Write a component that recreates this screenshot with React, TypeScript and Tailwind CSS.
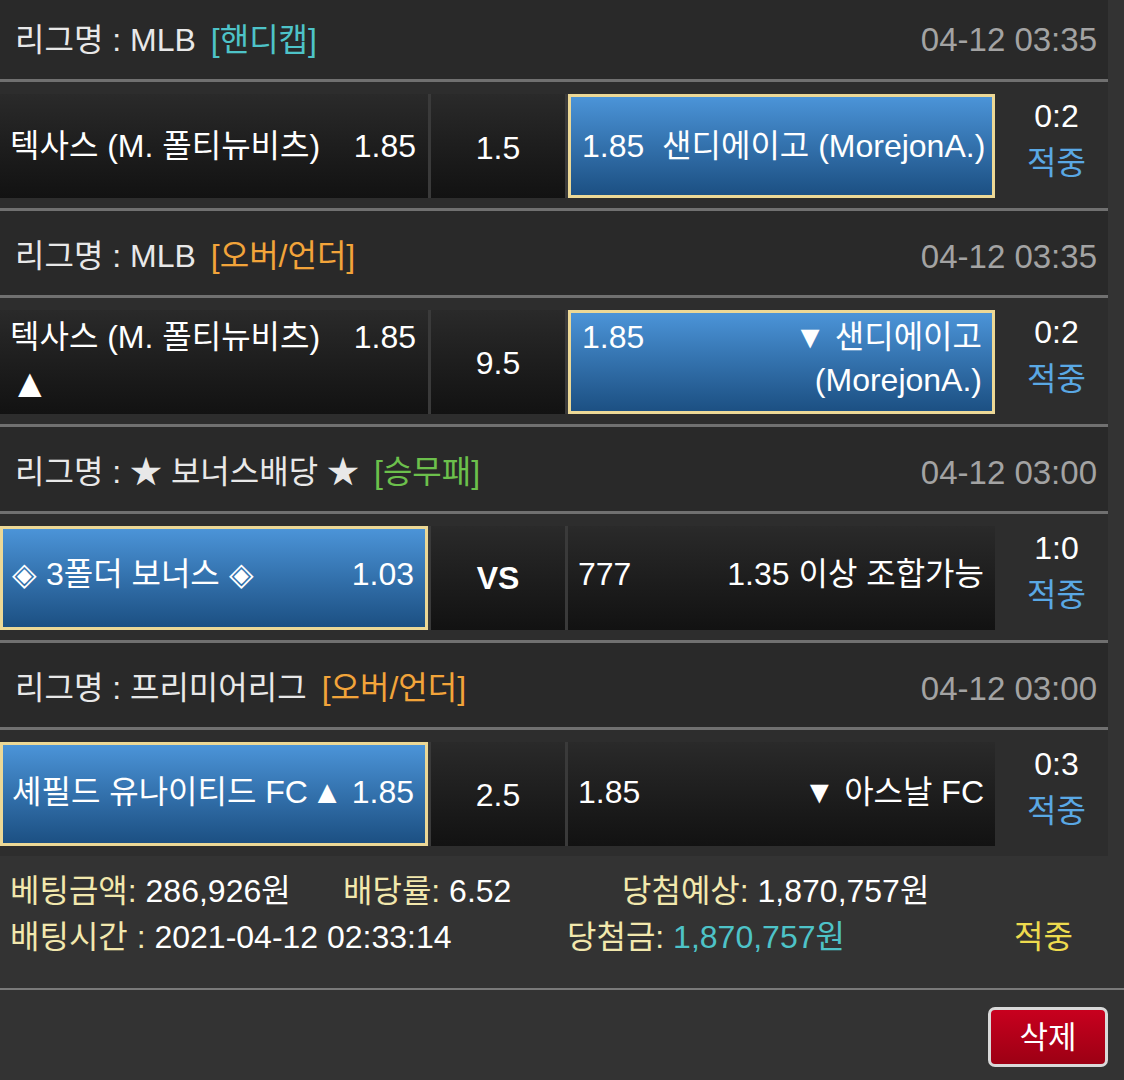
import type React from "react"

const darkCell = "bg-linear-to-b from-[#2a2a2a] to-[#121212] text-white"
const blueCell = "bg-linear-to-b from-[#4b94d8] to-[#1c5083] border-[3px] border-[#ecd896] text-white"

interface Game {
  league: string
  tag: string
  tagColor: string
  date: string
  left: React.ReactNode
  leftBlue?: boolean
  middle: React.ReactNode
  right: React.ReactNode
  rightBlue?: boolean
  score: string
}

const games: Game[] = [
  {
    league: "리그명 : MLB",
    tag: "[핸디캡]",
    tagColor: "text-[#4ec3c8]",
    date: "04-12 03:35",
    left: (
      <div className="flex w-full items-center justify-between pl-[10px] pr-[12px]">
        <span>텍사스 (M. 폴티뉴비츠)</span>
        <span>1.85</span>
      </div>
    ),
    middle: <span className="pt-[4px]">1.5</span>,
    right: (
      <div className="flex w-full items-center pl-[11px]">
        <span className="whitespace-nowrap">1.85&nbsp;&nbsp;샌디에이고 (MorejonA.)</span>
      </div>
    ),
    rightBlue: true,
    score: "0:2",
  },
  {
    league: "리그명 : MLB",
    tag: "[오버/언더]",
    tagColor: "text-[#f2a43a]",
    date: "04-12 03:35",
    left: (
      <div className="flex w-full flex-col self-start pl-[10px] pr-[12px] pt-[9px]">
        <div className="flex h-[36px] items-center justify-between">
          <span>텍사스 (M. 폴티뉴비츠)</span>
          <span>1.85</span>
        </div>
        <div className="flex h-[56px] items-center text-[40px]">▲</div>
      </div>
    ),
    middle: <span className="pt-[2px]">9.5</span>,
    right: (
      <div className="flex w-full flex-col self-start pl-[11px] pr-[10px] pt-[6px]">
        <div className="flex h-[36px] items-center justify-between">
          <span>1.85</span>
          <span className="whitespace-nowrap">▼ 샌디에이고</span>
        </div>
        <div className="flex h-[50px] items-center justify-end">(MorejonA.)</div>
      </div>
    ),
    rightBlue: true,
    score: "0:2",
  },
  {
    league: "리그명 : ★ 보너스배당 ★",
    tag: "[승무패]",
    tagColor: "text-[#6cc04c]",
    date: "04-12 03:00",
    left: (
      <div className="flex w-full items-center justify-between pl-[9px] pr-[11px] pb-[8px]">
        <span>◈ 3폴더 보너스 ◈</span>
        <span>1.03</span>
      </div>
    ),
    leftBlue: true,
    middle: <span className="font-bold">VS</span>,
    right: (
      <div className="flex w-full items-center justify-between pl-[10px] pr-[11px] pb-[8px]">
        <span>777</span>
        <span className="whitespace-nowrap">1.35 이상 조합가능</span>
      </div>
    ),
    score: "1:0",
  },
  {
    league: "리그명 : 프리미어리그",
    tag: "[오버/언더]",
    tagColor: "text-[#f2a43a]",
    date: "04-12 03:00",
    left: (
      <div className="flex w-full items-center justify-between pl-[9px] pr-[11px] pb-[4px]">
        <span className="whitespace-nowrap">셰필드 유나이티드 FC</span>
        <span className="whitespace-nowrap">▲ 1.85</span>
      </div>
    ),
    leftBlue: true,
    middle: <span className="pt-[2px]">2.5</span>,
    right: (
      <div className="flex w-full items-center justify-between pl-[10px] pr-[11px] pb-[4px]">
        <span>1.85</span>
        <span className="whitespace-nowrap">▼ 아스날 FC</span>
      </div>
    ),
    score: "0:3",
  },
]

function GameBlock({ game, first, last }: { game: Game; first: boolean; last: boolean }) {
  return (
    <div>
      {/* League header */}
      <div
        className={`flex items-center justify-between bg-[#292929] pl-[15px] pr-[11px] ${
          first ? "h-[79px]" : "h-[84px] pt-[6px]"
        }`}
      >
        <div className="flex items-center">
          <span className="text-[#e8e8e8]">{game.league}</span>
          <span className={`ml-[15px] ${game.tagColor}`}>{game.tag}</span>
        </div>
        <span className="text-[33px] text-[#a3a3a3]">{game.date}</span>
      </div>
      <div className="h-[3px] bg-[#707070]" />

      {/* Bet row */}
      <div className="flex h-[126px] bg-[#2d2d2d] pt-[12px] pb-[10px]">
        <div className="flex w-[995px] gap-[3px] bg-[#3a3a3a]">
          <div className={`flex w-[428px] items-center ${game.leftBlue ? blueCell : darkCell}`}>{game.left}</div>
          <div className={`flex w-[134px] items-center justify-center ${darkCell}`}>{game.middle}</div>
          <div className={`flex flex-1 items-center ${game.rightBlue ? blueCell : darkCell}`}>{game.right}</div>
        </div>
        <div className="flex flex-1 flex-col items-center justify-center pb-[13px] pl-[10px] leading-[47px]">
          <span className="text-white">{game.score}</span>
          <span className="text-[#5aa8e4]">적중</span>
        </div>
      </div>
      {!last && <div className="h-[3px] bg-[#707070]" />}
    </div>
  )
}

export default function App() {
  return (
    <div className="min-h-[1080px] w-[1124px] bg-[#333333] font-['Liberation_Sans','Noto_Sans_CJK_KR',sans-serif] text-[32px] leading-none">
      {/* Games */}
      <div className="w-[1108px]">
        {games.map((game, i) => (
          <GameBlock key={i} game={game} first={i === 0} last={i === games.length - 1} />
        ))}
      </div>

      {/* Bet summary */}
      <div className="pt-[12px] text-[32px]">
        <div className="flex h-[46px] items-center pl-[10px]">
          <div className="w-[333px]">
            <span className="text-[#f2e8ad]">베팅금액:</span>
            <span className="text-white"> 286,926원</span>
          </div>
          <div className="w-[279px]">
            <span className="text-[#f2e8ad]">배당률:</span>
            <span className="text-white"> 6.52</span>
          </div>
          <div>
            <span className="text-[#f2e8ad]">당첨예상:</span>
            <span className="text-white"> 1,870,757원</span>
          </div>
        </div>
        <div className="flex h-[46px] items-center pl-[10px]">
          <div className="w-[557px]">
            <span className="text-[#f2e8ad]">배팅시간 :</span>
            <span className="text-white"> 2021-04-12 02:33:14</span>
          </div>
          <div className="w-[447px]">
            <span className="text-[#f2e8ad]">당첨금:</span>
            <span className="text-[#4ec3c8]"> 1,870,757원</span>
          </div>
          <span className="text-[#eedb4e]">적중</span>
        </div>
      </div>
      <div className="mt-[28px] h-[2px] bg-[#7a7a7a]" />

      {/* Actions */}
      <div className="flex justify-end pr-[16px] pt-[17px]">
        <button className="flex h-[60px] w-[120px] items-center justify-center rounded-[7px] border-[3px] border-[#d9d9d9] bg-linear-to-b from-[#c8001e] to-[#9c0014] text-[31px] text-white">
          삭제
        </button>
      </div>
    </div>
  )
}
